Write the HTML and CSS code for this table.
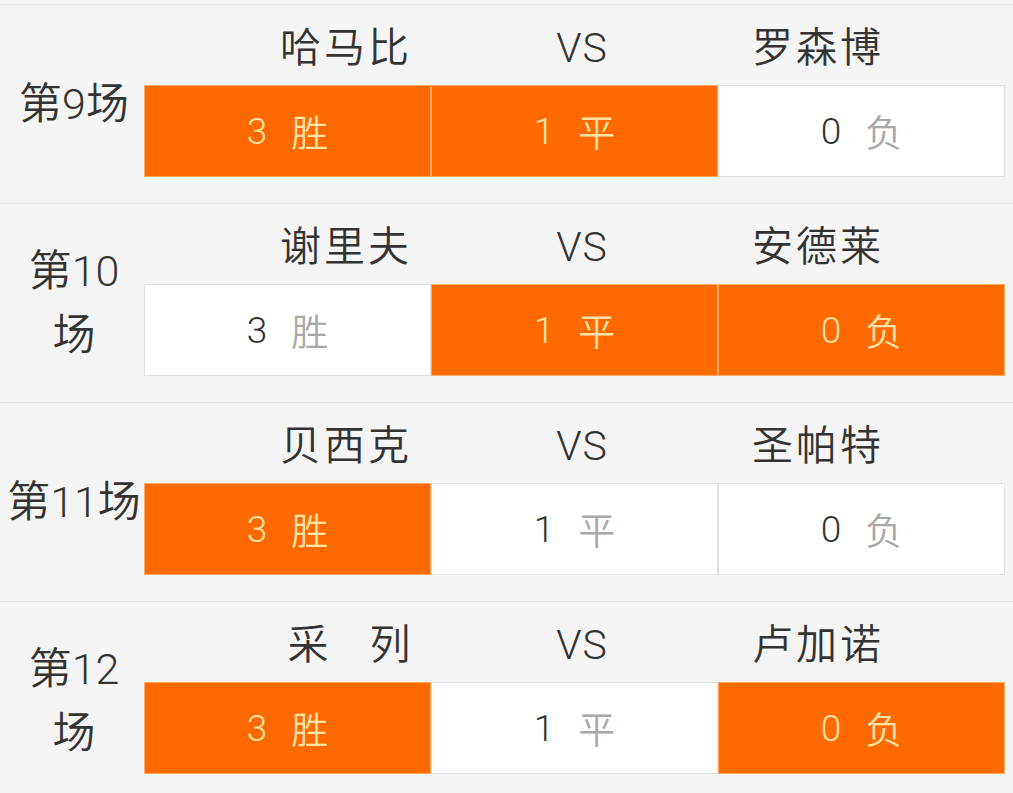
FILE: index.html
```html
<!DOCTYPE html>
<html lang="zh">
<head>
<meta charset="utf-8">
<title>胜平负</title>
<link rel="stylesheet" href="styles.css">
</head>
<body>
<div class="list">
  <section class="match">
    <div class="label"><p>第<span class="n">9</span>场</p></div>
    <div class="main">
      <div class="teams"><span>哈马比</span><span class="vs">VS</span><span>罗森博</span></div>
      <div class="odds">
        <div class="cell on"><span class="n">3</span><span class="t">胜</span></div>
        <div class="cell on"><span class="n">1</span><span class="t">平</span></div>
        <div class="cell"><span class="n">0</span><span class="t">负</span></div>
      </div>
    </div>
  </section>
  <section class="match">
    <div class="label"><p>第<span class="n">10</span><br>场</p></div>
    <div class="main">
      <div class="teams"><span>谢里夫</span><span class="vs">VS</span><span>安德莱</span></div>
      <div class="odds">
        <div class="cell"><span class="n">3</span><span class="t">胜</span></div>
        <div class="cell on"><span class="n">1</span><span class="t">平</span></div>
        <div class="cell on"><span class="n">0</span><span class="t">负</span></div>
      </div>
    </div>
  </section>
  <section class="match">
    <div class="label"><p>第<span class="n">11</span>场</p></div>
    <div class="main">
      <div class="teams"><span>贝西克</span><span class="vs">VS</span><span>圣帕特</span></div>
      <div class="odds">
        <div class="cell on"><span class="n">3</span><span class="t">胜</span></div>
        <div class="cell"><span class="n">1</span><span class="t">平</span></div>
        <div class="cell"><span class="n">0</span><span class="t">负</span></div>
      </div>
    </div>
  </section>
  <section class="match">
    <div class="label"><p>第<span class="n">12</span><br>场</p></div>
    <div class="main">
      <div class="teams"><span class="gap">采　列</span><span class="vs">VS</span><span>卢加诺</span></div>
      <div class="odds">
        <div class="cell on"><span class="n">3</span><span class="t">胜</span></div>
        <div class="cell"><span class="n">1</span><span class="t">平</span></div>
        <div class="cell on"><span class="n">0</span><span class="t">负</span></div>
      </div>
    </div>
  </section>
</div>
</body>
</html>
```
FILE: styles.css
```css
html, body {
  margin: 0;
  padding: 0;
  background: #f5f5f5;
}
body {
  padding-top: 4px;
  font-family: "Roboto", "Noto Sans CJK SC", sans-serif;
  font-weight: 350;
  color: #333;
}
.n {
  font-weight: 300;
}
.list {
  border-top: 1px solid #e4e4e4;
}
.match {
  display: flex;
  height: 198px;
  border-bottom: 1px solid #e4e4e4;
}
.label {
  width: 144px;
  flex: none;
  display: flex;
  align-items: center;
  justify-content: center;
  padding-left: 4px;
  box-sizing: border-box;
}
.label p {
  margin: 0;
  text-align: center;
  font-size: 43px;
  line-height: 64px;
  white-space: nowrap;
}
.main {
  display: flex;
  flex-direction: column;
}
.teams {
  height: 80px;
  padding-top: 6px;
  box-sizing: border-box;
  display: grid;
  grid-template-columns: repeat(3, 236px);
  padding-left: 84px;
  align-items: center;
  justify-items: center;
  font-size: 41px;
  line-height: 1;
  letter-spacing: 3px;
}
.teams .gap {
  letter-spacing: 0;
  padding-left: 6px;
}
.teams .vs {
  letter-spacing: 1px;
  font-weight: 300;
}
.odds {
  display: grid;
  grid-template-columns: repeat(3, 287px);
  height: 92px;
}
.cell {
  box-sizing: border-box;
  border: 1px solid #e0e0e0;
  background: #fff;
  display: flex;
  align-items: center;
  justify-content: center;
  font-size: 37px;
  color: #333;
}
.cell .t {
  margin-left: 24px;
  color: #a8a8a8;
}
.cell.on {
  background: #ff6a00;
  border-color: #ffa860;
  color: #ffe3a6;
}
.cell.on .t {
  color: #ffe3a6;
}
```
